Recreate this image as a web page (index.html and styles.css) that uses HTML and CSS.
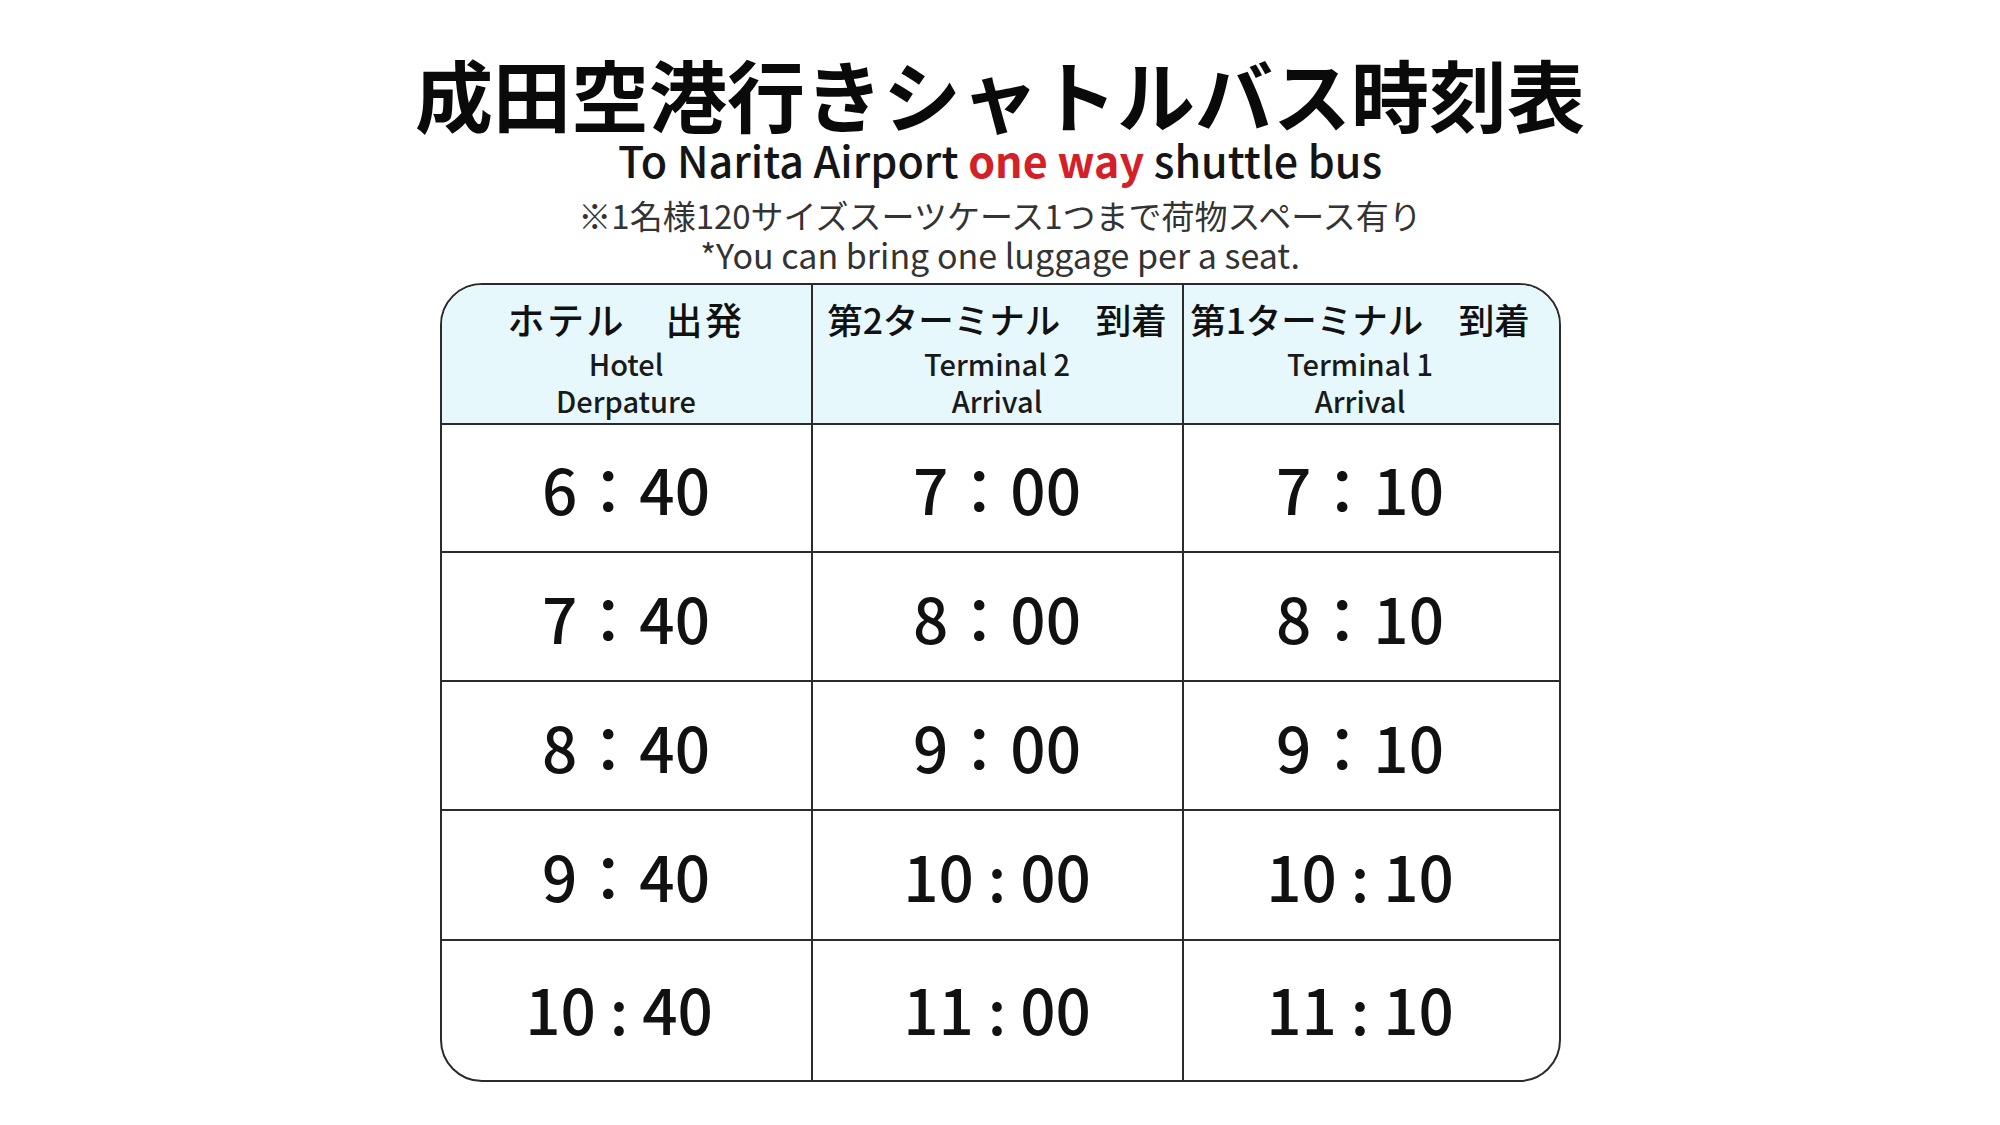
FILE: index.html
```html
<!DOCTYPE html>
<html lang="ja">
<head>
<meta charset="utf-8">
<title>成田空港行きシャトルバス時刻表</title>
<link rel="stylesheet" href="styles.css">
</head>
<body>
<main class="page">
  <h1 class="title">成田空港行きシャトルバス時刻表</h1>
  <p class="subtitle">To Narita Airport <span class="accent">one way</span> shuttle bus</p>
  <p class="note-jp">※1名様120サイズスーツケース1つまで荷物スペース有り</p>
  <p class="note-en">*You can bring one luggage per a seat.</p>

  <div class="timetable">
    <div class="cell head">
      <span class="head-jp wide">ホテル　出発</span>
      <span class="head-en">Hotel</span>
      <span class="head-en">Derpature</span>
    </div>
    <div class="cell head">
      <span class="head-jp">第2ターミナル　到着</span>
      <span class="head-en">Terminal 2</span>
      <span class="head-en">Arrival</span>
    </div>
    <div class="cell head last-col">
      <span class="head-jp">第1ターミナル　到着</span>
      <span class="head-en">Terminal 1</span>
      <span class="head-en">Arrival</span>
    </div>

    <div class="cell time">6：40</div>
    <div class="cell time">7：00</div>
    <div class="cell time last-col">7：10</div>

    <div class="cell time">7：40</div>
    <div class="cell time">8：00</div>
    <div class="cell time last-col">8：10</div>

    <div class="cell time">8：40</div>
    <div class="cell time">9：00</div>
    <div class="cell time last-col">9：10</div>

    <div class="cell time">9：40</div>
    <div class="cell time">10 : 00</div>
    <div class="cell time last-col">10 : 10</div>

    <div class="cell time last-row first-col">10 : 40</div>
    <div class="cell time last-row">11 : 00</div>
    <div class="cell time last-row last-col">11 : 10</div>
  </div>
</main>
</body>
</html>
```

FILE: styles.css
```css
html, body {
  margin: 0;
  padding: 0;
  background: #ffffff;
}

body {
  font-family: "Noto Sans CJK JP", "Noto Sans", sans-serif;
  color: #111111;
}

.page {
  width: 2000px;
  height: 1125px;
  display: flex;
  flex-direction: column;
  align-items: center;
  box-sizing: border-box;
  padding-top: 53px;
}

.title {
  margin: 0;
  font-size: 78px;
  line-height: 80px;
  font-weight: 700;
  color: #0a0a0a;
}

.subtitle {
  margin: 6px 0 0;
  font-size: 43px;
  line-height: 40px;
  font-weight: 500;
  color: #151515;
}

.accent {
  color: #d42027;
  font-weight: 700;
}

.note-jp {
  margin: 16px 0 0;
  font-size: 33px;
  line-height: 40px;
  color: #333333;
}

.note-en {
  margin: 2px 0 0;
  font-size: 34px;
  line-height: 36px;
  color: #333333;
}

.timetable {
  margin-top: 10px;
  width: 1121px;
  height: 799px;
  box-sizing: border-box;
  border: 2px solid #2b2b2b;
  border-radius: 42px;
  overflow: hidden;
  display: grid;
  grid-template-columns: 371px 371px 1fr;
  grid-template-rows: 140px 128px 129px 129px 130px 1fr;
}

.cell {
  box-sizing: border-box;
  border-right: 2px solid #2b2b2b;
  border-bottom: 2px solid #2b2b2b;
}

.cell.last-col {
  border-right: none;
  padding-right: 22px;
}

.cell.last-row {
  border-bottom: none;
  padding-bottom: 6px;
}

.cell.last-row.first-col {
  padding-right: 14px;
}

.head {
  background: #e6f8fc;
  display: flex;
  flex-direction: column;
  align-items: center;
  padding-top: 8px;
}

.head-jp {
  font-size: 35.5px;
  line-height: 52px;
  font-weight: 500;
  color: #111111;
  white-space: nowrap;
}

.head-jp.wide {
  font-size: 37px;
  letter-spacing: 2.5px;
}

.head-en {
  font-size: 29px;
  line-height: 37px;
  font-weight: 500;
  color: #1a1a1a;
}

.time {
  display: flex;
  align-items: center;
  justify-content: center;
  font-size: 62px;
  font-weight: 500;
  color: #111111;
  white-space: pre;
}
```
